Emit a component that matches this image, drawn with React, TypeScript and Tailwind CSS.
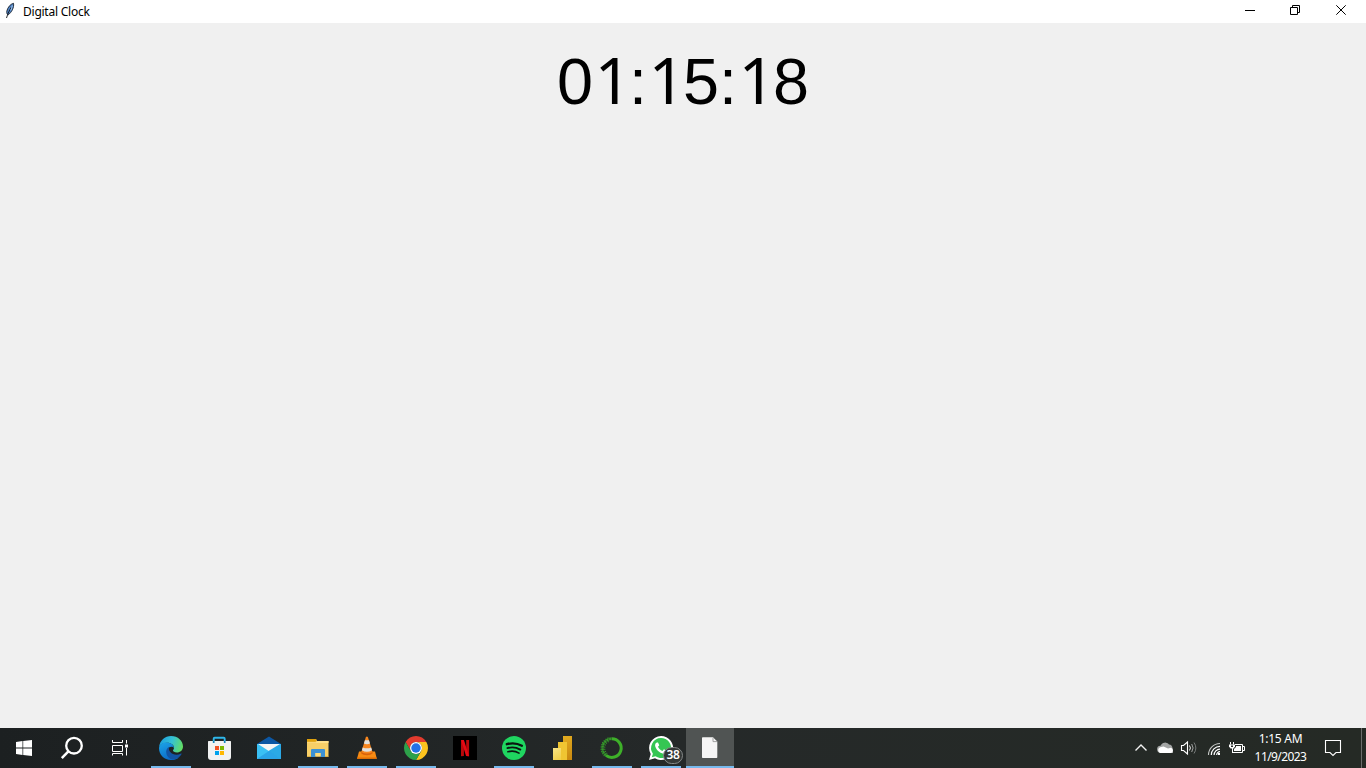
import type { ReactNode } from "react";

function Art({ children, w = 48, label }: { children: ReactNode; w?: number; label: string }) {
  return (
    <svg width={w} height="40" viewBox={`0 0 ${w} 40`} fill="none" role="img" aria-label={label} className="block shrink-0">
      {children}
    </svg>
  );
}

const StartIcon = () => (
  <Art label="Start">
    <path d="M16 13.900 22.500 13V19.500H16ZM23.200 12.900 32 12V19.500H23.200ZM16 20.400H22.500V27L16 26ZM23.200 20.400H32V28L23.200 27.100Z" fill="#fff" />
  </Art>
);

const SearchIcon = () => (
  <Art label="Search">
    <circle cx="26" cy="17.700" r="7.800" stroke="#fff" strokeWidth="2.300" />
    <path d="M20.400 23.300 13.800 30.200" stroke="#fff" strokeWidth="2.500" />
  </Art>
);

const TaskViewIcon = () => (
  <Art label="Task View">
    <path d="M16.500 12V14.500H26.500V12M16.500 17.500H26.500V23.500H16.500ZM16.500 27.500V25.500H26.500V27.500M30.500 12V15.500M30.500 20V27.500" stroke="#fff" />
    <path d="M29 16.500H32V19.500H29Z" fill="#fff" />
  </Art>
);

const EdgeIcon = () => (
  <Art label="Edge">
    <defs>
      <linearGradient id="edgeTop" x1="12" y1="12" x2="36" y2="20" gradientUnits="userSpaceOnUse">
        <stop stopColor="#1b9de0" />
        <stop offset=".5" stopColor="#35c1d4" />
        <stop offset="1" stopColor="#66e05a" />
      </linearGradient>
      <linearGradient id="edgeLeft" x1="12" y1="14" x2="20" y2="32" gradientUnits="userSpaceOnUse">
        <stop stopColor="#1ca6e8" />
        <stop offset="1" stopColor="#0c6cc9" />
      </linearGradient>
    </defs>
    <path d="M12.100 19C12.800 12.500 18 8 24 8C31 8 36 13 36 18.500C36 22.200 33.200 24.500 29.800 24.500C27.500 24.500 26 23.600 26 22.600C26 21.900 27 21.400 27 19.800C27 17.200 24.200 14.800 20 14.800C16.500 14.800 13.600 16.200 12.100 19Z" fill="url(#edgeTop)" />
    <path d="M12 20C12.400 16.400 15.600 14.400 19.400 14.400C23.600 14.400 27 16.800 27 20C25.500 17.800 22 18.500 20.700 21C19.500 24 21 28.500 26 30C28 30.500 30 30.200 32 29.200C29.500 31.500 27 32 24 32C17 32 12 26.700 12 20Z" fill="url(#edgeLeft)" />
    <path d="M22.500 18.700C19.500 20 18.500 23 19.500 26C20.500 29.500 23.500 31.700 27 31.600C30.500 30.700 33 28.700 34.600 26C34.800 25.500 34.500 25.200 34 25.500C30.500 27.500 25.700 27 23.300 24C21.800 22.200 21.400 20.200 22.500 18.700Z" fill="#1254a4" />
  </Art>
);

const StoreIcon = () => (
  <Art label="Microsoft Store">
    <path d="M17.700 14.500V10.800Q17.700 9.700 18.700 9.700H27.700Q28.700 9.700 28.700 10.800V14.500" stroke="#2fb7ea" strokeWidth="1.900" />
    <path d="M12.500 13H34.500Q35 13 35 13.500V29Q35 32 32 32H15Q12 32 12 29V13.500Q12 13 12.500 13Z" fill="#f1f2f2" />
    <path d="M17.700 13V15M28.700 13V15" stroke="#1484bb" strokeWidth="1.700" />
    <path d="M19 18H23V22H19Z" fill="#f05125" />
    <path d="M24 18H28V22H24Z" fill="#7eb900" />
    <path d="M19 23H23V27H19Z" fill="#00a3ee" />
    <path d="M24 23H28V27H24Z" fill="#ffb800" />
  </Art>
);

const MailIcon = () => (
  <Art label="Mail">
    <path d="M12 16 24 8.500 36 16V20H12Z" fill="#0c57a4" />
    <path d="M13 16H35V22L24 27 14 22Z" fill="#f5f5f5" />
    <path d="M23.500 23 35 16H36V31H12Z" fill="#2ba9e6" />
    <path d="M12 16H13L36 31H12Z" fill="#3ac0f4" />
    <path d="M12 31 24 23 36 31Z" fill="#1988d9" opacity=".5" />
  </Art>
);

const ExplorerIcon = () => (
  <Art label="File Explorer">
    <path d="M13 11H22L23 13H34.500V28.500H13Z" fill="#f7cf67" />
    <path d="M13 11H22L22.700 12.500 21.500 13.700H13Z" fill="#dfa10d" />
    <path d="M13 14.500H22L23.500 13H34.500V15H13Z" fill="#ffe08a" />
    <path d="M17 22Q17 21 18 21H30Q31 21 31 22V29H26.600V25H21.400V29H17Z" fill="#3c91d4" />
    <path d="M21.400 25H26.600V28.500H21.400Z" fill="#ffdb78" />
    <path d="M13 28H17V29H13ZM31 28H34.500V29H31Z" fill="#dcae43" />
  </Art>
);

const VlcIcon = () => (
  <Art label="VLC media player">
    <path d="M16 23.500H32L33.800 30.700H14Z" fill="#f78b13" />
    <path d="M14.200 29.500H33.700V31H14.200Z" fill="#dd6d05" />
    <path d="M22.900 9Q23.900 8 24.900 9L29.800 25Q28 27.500 24 27.500T18 25Z" fill="#f6861f" />
    <path d="M21.900 12.200H26L27 15.500Q24 16.800 20.900 15.500ZM19.700 19.500Q24 21.200 28.200 19.500L29 22.300Q24 25.300 18.900 22.300Z" fill="#dfe1e0" />
    <path d="M18.300 24Q24 27 29.500 24L29.800 25.300Q28 27.300 24 27.300T18 25.300Z" fill="#d96309" />
  </Art>
);

const ChromeIcon = () => (
  <Art label="Chrome">
    <path d="M13.610 14A12 12 0 0 1 34.390 14H24A6 6 0 0 0 18.800 23Z" fill="#e33b2e" />
    <path d="M34.390 14A12 12 0 0 1 24 32L29.200 23A6 6 0 0 0 24 14Z" fill="#fcc31e" />
    <path d="M13.610 14A12 12 0 0 0 24 32L29.200 23A6 6 0 0 1 18.800 23Z" fill="#2da14a" />
    <circle cx="24" cy="20" r="6" fill="#fff" />
    <circle cx="24" cy="20" r="4.750" fill="#2372e8" />
  </Art>
);

const NetflixIcon = () => (
  <Art label="Netflix">
    <path d="M12 8H36V32H12Z" fill="#000" />
    <path d="M20 12H22.900V28L20 28.300ZM25.200 12H28.100V28.300L25.200 28Z" fill="#b9090b" />
    <path d="M20 12H22.900L28.100 28.300 25.100 28Z" fill="#e50914" />
  </Art>
);

const SpotifyIcon = () => (
  <Art label="Spotify">
    <circle cx="24" cy="20" r="12" fill="#1fd660" />
    <path d="M16.800 16.200C21.500 14.800 27.500 15.300 31.900 17.800" stroke="#0b1510" strokeWidth="2.300" strokeLinecap="round" />
    <path d="M17.400 20.100C21.500 18.900 26.600 19.500 30.300 21.600" stroke="#0b1510" strokeWidth="1.900" strokeLinecap="round" />
    <path d="M17.900 23.700C21.500 22.800 25.800 23.100 29 25.100" stroke="#0b1510" strokeWidth="1.600" strokeLinecap="round" />
  </Art>
);

const PowerBiIcon = () => (
  <Art label="Power BI">
    <defs>
      <linearGradient id="biBack" x1="24" y1="8" x2="33" y2="32" gradientUnits="userSpaceOnUse">
        <stop stopColor="#e3ac20" />
        <stop offset="1" stopColor="#c88710" />
      </linearGradient>
      <linearGradient id="biFront" x1="14" y1="19" x2="22" y2="32" gradientUnits="userSpaceOnUse">
        <stop stopColor="#fae68a" />
        <stop offset="1" stopColor="#f1cd43" />
      </linearGradient>
    </defs>
    <path d="M24 8H33V32H24Z" fill="url(#biBack)" />
    <path d="M19 14H28V32H19Z" fill="#f0c532" />
    <path d="M14 20H22V32H14Z" fill="url(#biFront)" />
  </Art>
);

const AnacondaIcon = () => (
  <Art label="Anaconda">
    <path d="M23.500 10.800A9.300 9.300 0 1 1 18 27.300" stroke="#3eb029" strokeWidth="3" />
    <path d="M18 27.300A9.300 9.300 0 0 1 23.500 10.800" stroke="#35972a" strokeWidth="2.300" strokeDasharray="2.300 .5" />
    <path d="M16.500 28A10.800 10.800 0 0 1 22.500 9.500" stroke="#35972a" strokeWidth="1.200" strokeDasharray="1.200 1.100" />
    <path d="M19.200 25.600A7.400 7.400 0 0 1 22 12.900" stroke="#35972a" strokeWidth="1.100" strokeDasharray="1.100 1.100" />
  </Art>
);

const WhatsAppIcon = () => (
  <Art label="WhatsApp">
    <path d="M24 8A12 12 0 1 1 18 30.300L12 32 13.700 26A12 12 0 0 1 24 8Z" fill="#fff" />
    <path d="M24 10A10 10 0 1 1 18.500 28.300L14.800 29.300 15.900 25.700A10 10 0 0 1 24 10Z" fill="#35c653" />
    <path d="M20.300 14.500C19.500 14.300 18 15.600 18.100 17.500C18.300 20.800 22.500 25.200 26.500 25.700C28.500 25.900 30.200 24.700 30.100 22.900L26.900 21.300 25.400 23C23.500 22.300 21.700 20.400 21 18.700L22.300 17.300 21 14.600Z" fill="#fff" />
  </Art>
);

const DocumentIcon = () => (
  <Art label="Digital Clock">
    <path d="M16 10Q16 9.300 16.700 9.300H27L31.300 13.600V29.300Q31.300 30 30.600 30H16.700Q16 30 16 29.300Z" fill="#f5f5f5" />
    <path d="M27 9.800V13.600H31" stroke="#999" strokeWidth=".9" />
  </Art>
);

type App = { icon: ReactNode; running?: boolean; active?: boolean; badge?: string };

const apps: App[] = [
  { icon: <EdgeIcon />, running: true },
  { icon: <StoreIcon /> },
  { icon: <MailIcon /> },
  { icon: <ExplorerIcon />, running: true },
  { icon: <VlcIcon />, running: true },
  { icon: <ChromeIcon />, running: true },
  { icon: <NetflixIcon /> },
  { icon: <SpotifyIcon />, running: true },
  { icon: <PowerBiIcon /> },
  { icon: <AnacondaIcon />, running: true },
  { icon: <WhatsAppIcon />, running: true, badge: "38" },
  { icon: <DocumentIcon />, active: true },
];

function TaskButton({ icon, running, active, badge }: App) {
  return (
    <button className={`relative h-10 w-12 shrink-0 ${active ? "bg-[#505453]" : ""}`}>
      {icon}
      {(running || active) && (
        <span className={`absolute bottom-0 h-0.5 bg-[#76b9ed] ${active ? "inset-x-0" : "inset-x-1"}`} />
      )}
      {badge && (
        <span className="absolute top-[19px] left-[26px] flex h-[17px] w-5 items-center justify-center rounded-full border border-[#858989] bg-[#343837] pb-px text-[12px] leading-none font-semibold tracking-[-0.3px] text-white">
          {badge}
        </span>
      )}
    </button>
  );
}

function TitleBar() {
  return (
    <header className="flex h-[23px] shrink-0 items-center justify-between bg-white">
      <div className="flex items-center">
        <svg width="23" height="23" viewBox="0 0 23 23" fill="none" aria-hidden="true">
          <path d="M13.500 3.300C10.500 4 7.500 7.500 6.800 11.200C6.500 13 7.300 15 8.200 14.800C11.500 12.500 14.300 7.500 13.500 3.300Z" fill="#4f82c4" stroke="#17202b" strokeWidth=".9" />
          <path d="M11.500 7C9.500 10 8 13 6.500 18" stroke="#101418" strokeWidth=".9" />
          <path d="M12.400 5.500 10.800 10.500" stroke="#a0c5ee" strokeWidth="1" />
        </svg>
        <span className="text-[12px] leading-[22px] tracking-[-0.24px] text-black">Digital Clock</span>
      </div>
      <svg width="138" height="23" viewBox="0 0 138 23" fill="none" stroke="#000" aria-label="Window controls">
        <path d="M17 10.500H27" />
        <path d="M62.500 7.500H69.500V14.500H62.500ZM64.500 7V5.500H71.500V12.500H70" />
        <path d="M108.300 5.300 117.700 14.700M117.700 5.300 108.300 14.700" />
      </svg>
    </header>
  );
}

function Tray() {
  return (
    <div className="flex shrink-0">
      <Art w={120} label="System tray">
        <path d="M9.500 22.500 15 17 20.500 22.500" stroke="#f2f2f2" strokeWidth="1.400" />
        <path d="M35 25A3.500 3.500 0 0 1 34.500 17.700A5 5 0 0 1 43 16.400A4 4 0 0 1 46.500 20L47 25Z" fill="#a3a5a4" />
        <path d="M34 25A3.200 3.200 0 0 1 34 19.200L37.500 18.400 42 20.500 45 19.800A2.700 2.700 0 0 1 45 25Z" fill="#fff" />
        <path d="M55.500 17.500H57.500L61.500 14V26L57.500 22.500H55.500Z" stroke="#fff" strokeWidth="1.100" />
        <path d="M63.500 17.500Q65.300 20 63.500 22.500" stroke="#f1f1f1" />
        <path d="M65.700 16Q68.500 20 65.700 24" stroke="#a4a6a5" />
        <path d="M68 14.500Q71.700 20 68 25.500" stroke="#777b7a" />
        <path d="M82.500 27A11.500 11.500 0 0 1 94 15.500" stroke="#c5c7c6" strokeWidth="1.100" />
        <path d="M85.300 27A8.700 8.700 0 0 1 94 18.300M88.100 27A5.900 5.900 0 0 1 94 21.100M90.700 27A3.300 3.300 0 0 1 94 23.700" stroke="#fff" strokeWidth="1.200" />
        <path d="M92 25H94V27H92Z" fill="#fff" />
        <path d="M109 16.500H116.500V24.500H106" stroke="#fff" />
        <path d="M117 18.500H118.500V22.500H117" stroke="#fff" />
        <path d="M110 18H115V23H108V21L110 19Z" fill="#fff" />
        <path d="M104.500 14V16.500M107.500 14V16.500" stroke="#fff" />
        <path d="M103 16.500H109V18.500L107.500 20.500H104.500L103 18.500Z" fill="#fff" />
        <path d="M105 17.500H107V19H105Z" fill="#252a27" />
        <path d="M106.500 20V25" stroke="#fff" />
      </Art>
      <div className="flex w-[70px] flex-col items-center pt-0.5 pr-px text-[12px] leading-[18px] text-white">
        <span className="tracking-[-0.25px]">1:15 AM</span>
        <span className="tracking-[-0.58px]">11/9/2023</span>
      </div>
      <Art w={50} label="Notifications">
        <path d="M9.500 12.500H24.500V24.500H20L17 27.500 14 24.500H9.500Z" stroke="#fff" strokeWidth="1.100" />
        <path d="M45.500 0V40" stroke="#6b6d6c" />
      </Art>
    </div>
  );
}

/* Noto Sans draws "1" without a foot; tracking and margins keep it on the same advance as the other digits. */
const One = () => <span className="mr-[-1.500px] ml-[1.500px] font-['Noto_Sans',sans-serif] tracking-[-1px]">1</span>;

export default function DigitalClock() {
  return (
    <div className="flex h-[768px] w-[1366px] flex-col overflow-hidden bg-[#f0f0f0] font-['Noto_Sans','Open_Sans',sans-serif]">
      <TitleBar />
      <main className="flex flex-1 justify-center pt-[22px]">
        <time className="h-[74px] font-['Liberation_Sans',Arial,sans-serif] text-[64.750px] leading-[74px] text-black [&>span]:leading-[0]">
          0<One />:<One />5:<One />8
        </time>
      </main>
      <footer className="flex h-10 shrink-0 justify-between bg-linear-to-r from-[#1c2021] via-[#252929] to-[#252a25]">
        <nav className="flex">
          <button className="h-10 w-12"><StartIcon /></button>
          <button className="h-10 w-12"><SearchIcon /></button>
          <button className="mr-[3px] h-10 w-12"><TaskViewIcon /></button>
          <div className="flex gap-px">
            {apps.map((app, i) => <TaskButton key={i} {...app} />)}
          </div>
        </nav>
        <Tray />
      </footer>
    </div>
  );
}
